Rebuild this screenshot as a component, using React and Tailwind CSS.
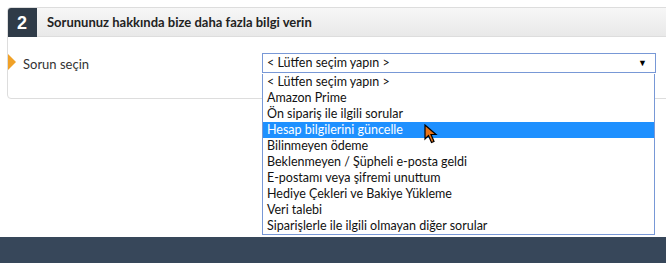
import React from 'react';

const options = [
    '< Lütfen seçim yapın >',
    'Amazon Prime',
    'Ön sipariş ile ilgili sorular',
    'Hesap bilgilerini güncelle',
    'Bilinmeyen ödeme',
    'Beklenmeyen / Şüpheli e-posta geldi',
    'E-postamı veya şifremi unuttum',
    'Hediye Çekleri ve Bakiye Yükleme',
    'Veri talebi',
    'Siparişlerle ile ilgili olmayan diğer sorular',
];

const Cursor = () => (
    <svg width="14" height="20" viewBox="0 0 14 20" className="absolute left-[424px] top-[124px]">
        <path d="M1 1 L1 15 L4.5 11.5 L7.5 18.5 L10 17.5 L7 10.5 L12 10.5 Z" fill="#e8731a" stroke="#000" strokeWidth="1.2" strokeLinejoin="miter" />
    </svg>
);

export default function App() {
    return (
        <div className="relative w-[666px] h-[263px] overflow-hidden bg-white flex flex-col font-['Lato','Open_Sans',sans-serif]">
            {/* Panel */}
            <div className="h-[237px] pt-[7px] pl-[7px]">
                <div className="w-[680px] border border-[#dddddd] rounded-[4px] overflow-hidden">
                    <div className="flex h-[29px] items-stretch bg-gradient-to-b from-[#f7f7f7] to-[#e9e9e9] border-b border-[#dddddd]">
                        <div className="w-[30px] -mt-px -ml-px h-[30px] pt-[2px] bg-[#2f3b48] text-white font-bold text-[18px] flex items-center justify-center font-['Liberation_Sans',sans-serif]">
                            2
                        </div>
                        <div className="pl-[10px] pt-[2px] flex items-center text-[13px] font-bold text-[#222]">
                            Sorununuz hakkında bize daha fazla bilgi verin
                        </div>
                    </div>
                    <div className="h-[61px] pt-[16px] flex">
                        <div className="w-[254px] flex items-start">
                            <div className="w-0 h-0 border-y-[8px] border-y-transparent border-l-[8px] border-l-[#f0a127] mt-[1px]" />
                            <span className="ml-[7px] mt-[2px] text-[13px] text-[#333] leading-[18px]">Sorun seçin</span>
                        </div>
                        <div className="w-[394px] h-[20px] border border-[#7898d6] flex items-center justify-between pl-[4px] pr-[8px] text-[12.5px] text-[#111]">
                            <span>&lt; Lütfen seçim yapın &gt;</span>
                            <span className="text-[9px] text-black">▼</span>
                        </div>
                    </div>
                </div>
            </div>

            {/* Open dropdown list */}
            <div className="absolute left-[262px] top-[74px] w-[393px] border-x border-b border-[#7898d6] bg-white">
                {options.map((o, i) => (
                    <div
                        key={o}
                        className={`h-[16px] pl-[4px] flex items-center text-[12.5px] leading-none ${
                            i === 3 ? 'bg-[#1e90ff] text-white' : 'text-[#111]'
                        }`}
                    >
                        {o}
                    </div>
                ))}
            </div>

            <Cursor />

            {/* Footer */}
            <div className="flex-1 bg-[#37475a]" />
        </div>
    );
}
